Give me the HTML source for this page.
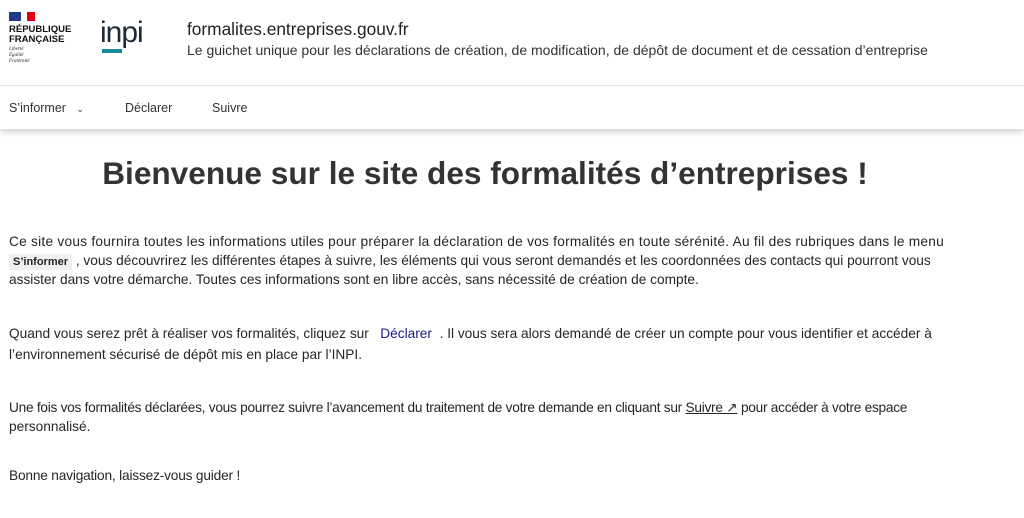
<!DOCTYPE html>
<html><head><meta charset="utf-8"><style>
body{margin:0;width:1024px;height:518px;background:#fff;font-family:"Liberation Sans",sans-serif;color:#222;overflow:hidden;position:relative}
.a{position:absolute;white-space:nowrap}
p.l{position:absolute;left:9px;margin:0;font-size:13.7px;white-space:nowrap;color:#262626}
</style></head><body>
<div class="a" style="left:9px;top:12px;width:12px;height:9px;background:#1f3c8c"></div>
<div class="a" style="left:21px;top:12px;width:6px;height:9px;background:#fff"></div>
<div class="a" style="left:27px;top:12px;width:8px;height:9px;background:#e1000f"></div>
<div class="a" style="left:9px;top:25px;font-size:9.5px;font-weight:bold;line-height:10px;color:#111">RÉPUBLIQUE<br>FRANÇAISE</div>
<div class="a" style="left:9px;top:47px;font-size:5px;font-style:italic;line-height:6px;font-family:'Liberation Serif',serif">Liberté<br>Égalité<br>Fraternité</div>
<div class="a" style="left:100px;top:18px;font-size:30px;line-height:30px;color:#1e2a38;letter-spacing:-1px">inpi</div>
<div class="a" style="left:102px;top:49px;width:20px;height:4px;background:#1a8c98"></div>
<div class="a" style="left:187px;top:19px;font-size:17.3px;color:#222">formalites.entreprises.gouv.fr</div>
<div class="a" style="left:187px;top:42px;font-size:14px;color:#333">Le guichet unique pour les déclarations de création, de modification, de dépôt de document et de cessation d’entreprise</div>
<div class="a" style="left:0;top:85px;width:1024px;height:1px;background:#e5e5e5"></div>
<div class="a" style="left:0;top:86px;width:1024px;height:43px;background:#fff;box-shadow:0 4px 5px rgba(0,0,0,.15)"></div>
<div class="a" style="left:9px;top:101px;font-size:12.5px;color:#333">S’informer&nbsp;&nbsp;&nbsp;<span style="font-size:9px">&#8964;</span></div>
<div class="a" style="left:125px;top:101px;font-size:12.5px;color:#333">Déclarer</div>
<div class="a" style="left:212px;top:101px;font-size:12.5px;color:#333">Suivre</div>
<div class="a" style="left:0;width:970px;text-align:center;top:155px;font-size:31.6px;font-weight:bold;color:#333">Bienvenue sur le site des formalités d’entreprises !</div>
<p class="l" style="top:234px;letter-spacing:0.25px">Ce site vous fournira toutes les informations utiles pour préparer la déclaration de vos formalités en toute sérénité. Au fil des rubriques dans le menu</p>
<p class="l" style="top:253px"><span style="background:#f0f0f0;font-size:11px;padding:2px 4px;font-weight:bold">S’informer</span> , vous découvrirez les différentes étapes à suivre, les éléments qui vous seront demandés et les coordonnées des contacts qui pourront vous</p>
<p class="l" style="top:272px">assister dans votre démarche. Toutes ces informations sont en libre accès, sans nécessité de création de compte.</p>
<p class="l" style="top:326px">Quand vous serez prêt à réaliser vos formalités, cliquez sur &nbsp; <span style="color:#1a1a8c">Déclarer</span> &nbsp;. Il vous sera alors demandé de créer un compte pour vous identifier et accéder à</p>
<p class="l" style="top:347px">l’environnement sécurisé de dépôt mis en place par l’INPI.</p>
<p class="l" style="top:400px;letter-spacing:-0.27px">Une fois vos formalités déclarées, vous pourrez suivre l’avancement du traitement de votre demande en cliquant sur <span style="text-decoration:underline">Suivre ↗</span> pour accéder à votre espace</p>
<p class="l" style="top:419px">personnalisé.</p>
<p class="l" style="top:468px;letter-spacing:-0.18px">Bonne navigation, laissez-vous guider !</p>
</body></html>
